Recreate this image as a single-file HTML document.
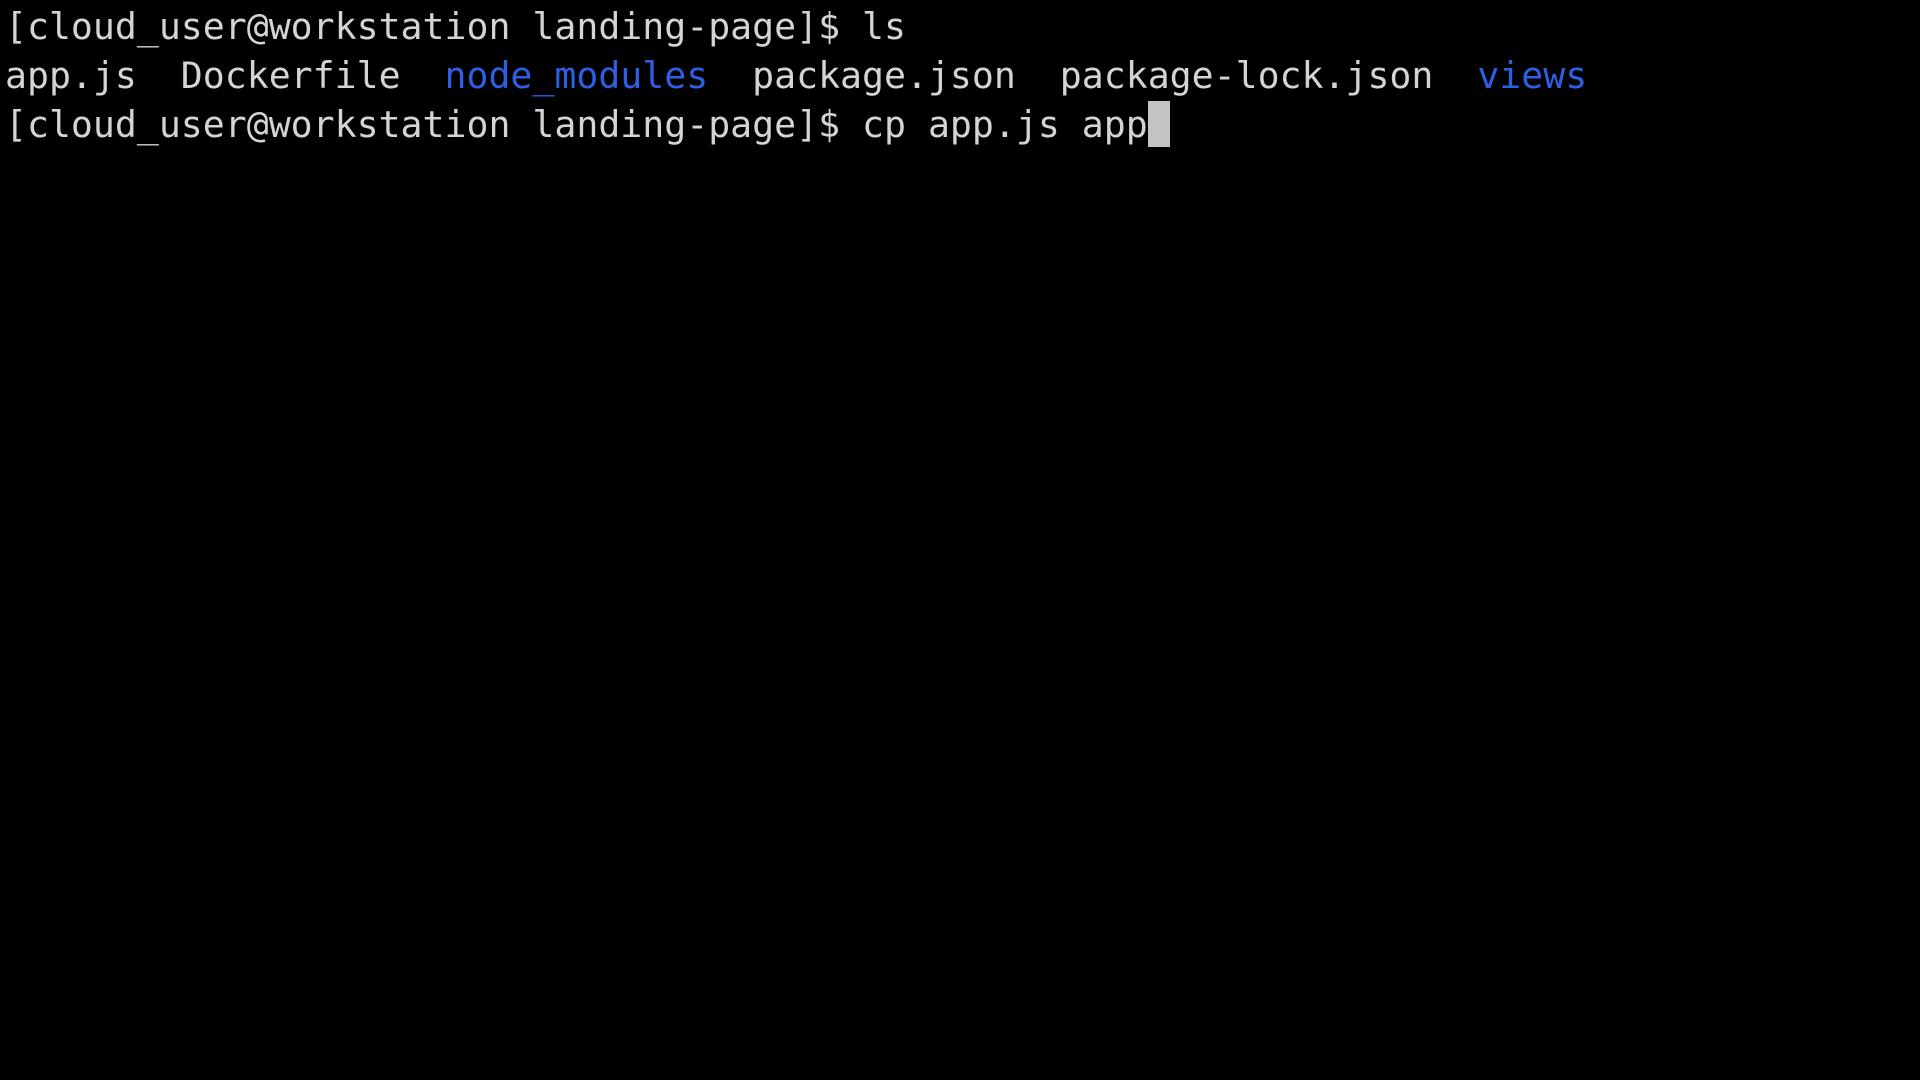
<!DOCTYPE html>
<html><head><meta charset="utf-8"><style>
html,body{margin:0;padding:0;background:#000;width:1920px;height:1080px;overflow:hidden}
.t{position:absolute;left:5px;top:2px;font-family:"DejaVu Sans Mono","Liberation Mono",monospace;font-size:36.5px;line-height:49px;color:#d4d4d4;white-space:pre}
.b{color:#2d5fe3}
.c{display:inline-block;width:22px;height:46px;background:#c4c4c4;vertical-align:top;margin-top:1px}
</style></head><body>
<div class="t">[cloud_user@workstation landing-page]$ ls
app.js  Dockerfile  <span class="b">node_modules</span>  package.json  package-lock.json  <span class="b">views</span>
[cloud_user@workstation landing-page]$ cp app.js app<span class="c"></span></div>
</body></html>
